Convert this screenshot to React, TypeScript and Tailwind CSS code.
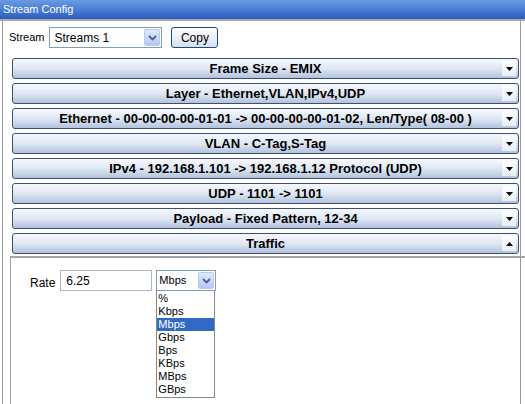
import React from "react"

const bars = [
  { label: "Frame Size - EMIX", open: false },
  { label: "Layer - Ethernet,VLAN,IPv4,UDP", open: false },
  { label: "Ethernet - 00-00-00-00-01-01 -> 00-00-00-00-01-02, Len/Type( 08-00 )", open: false },
  { label: "VLAN - C-Tag,S-Tag", open: false },
  { label: "IPv4 - 192.168.1.101 -> 192.168.1.12 Protocol (UDP)", open: false },
  { label: "UDP - 1101 -> 1101", open: false },
  { label: "Payload - Fixed Pattern, 12-34", open: false },
  { label: "Traffic", open: true },
]

const units = ["%", "Kbps", "Mbps", "Gbps", "Bps", "KBps", "MBps", "GBps"]

const ComboArrow = () => (
  <div className="w-[16px] h-full flex items-center justify-center rounded-[2px] border border-[#b9c9ef] bg-gradient-to-b from-[#e1eafe] to-[#b4c8f6]">
    <svg width="9" height="6" viewBox="0 0 9 6">
      <path d="M1 1 L4.5 4.5 L8 1" fill="none" stroke="#4d6185" strokeWidth="1.8" />
    </svg>
  </div>
)

const SectionBar = ({ label, open }: { label: string; open: boolean }) => (
  <div className="relative h-[21px] rounded-[3px] border border-[#3b4f73] bg-gradient-to-b from-[#f7f9fd] via-[#dfe7f3] to-[#b3c3dc] flex items-center justify-center">
    <span className="text-[13px] font-bold text-black leading-none">{label}</span>
    <div className="absolute right-[2px] top-[2px] bottom-[2px] w-[14px] bg-gradient-to-b from-white to-[#e8edf5] flex items-center justify-center">
      <svg width="7" height="4" viewBox="0 0 7 4">
        {open ? <path d="M0 4 L3.5 0 L7 4 Z" fill="#000" /> : <path d="M0 0 L7 0 L3.5 4 Z" fill="#000" />}
      </svg>
    </div>
  </div>
)

export default function App() {
  return (
    <div
      className="w-[525px] h-[404px] bg-white overflow-hidden flex flex-col text-[11px] text-black"
      style={{ fontFamily: '"Liberation Sans", Arial, sans-serif' }}
    >
      <div className="h-[19px] shrink-0 bg-gradient-to-b from-[#6b9be3] via-[#4a7ed6] to-[#2d5bbd] flex items-center pl-[3px]">
        <span className="text-white text-[11px]">Stream Config</span>
      </div>
      <div className="h-[2px] shrink-0 bg-[#a9a9a9]" />
      <div className="flex-1 flex flex-col ml-[2px] mr-[4px] border-l border-r border-[#9a9a9a]">
        <div className="flex items-center mt-[6px] h-[21px] pl-[6px]">
          <span className="mr-[5px]">Stream</span>
          <div className="w-[113px] h-[21px] border border-[#7f9db9] flex items-center justify-between pl-[4px] pr-[1px] py-[1px]">
            <span className="text-[12px]">Streams 1</span>
            <ComboArrow />
          </div>
          <button className="ml-[9px] w-[47px] h-[21px] rounded-[3px] border border-[#1c4a86] bg-gradient-to-b from-white to-[#d8e0ee] text-[12px]">
            Copy
          </button>
        </div>
        <div className="flex flex-col gap-[4px] mt-[10px] ml-[9px] mr-[1px]">
          {bars.map((b) => (
            <SectionBar key={b.label} label={b.label} open={b.open} />
          ))}
        </div>
        <div className="flex-1 mt-[2px] ml-[7px] -mr-[6px] border-t-2 border-l border-[#a3a3a3]">
          <div className="flex items-start mt-[12px] ml-[19px]">
            <span className="mt-[4px] mr-[5px] text-[12px]">Rate</span>
            <div className="w-[92px] h-[21px] border border-[#a8b5c4] flex items-center pl-[5px] text-[12px]">6.25</div>
            <div className="ml-[4px] flex flex-col">
              <div className="w-[60px] h-[21px] border border-[#7f9db9] flex items-center justify-between pl-[2px] pr-[1px] py-[1px]">
                <span>Mbps</span>
                <ComboArrow />
              </div>
              <div className="w-[59px] border border-[#888] border-t-0 flex flex-col py-[1px]">
                {units.map((u) => (
                  <div
                    key={u}
                    className={`h-[13px] leading-[13px] pl-[1px] ${u === "Mbps" ? "bg-[#316ac5] text-white" : ""}`}
                  >
                    {u}
                  </div>
                ))}
              </div>
            </div>
          </div>
        </div>
      </div>
    </div>
  )
}
